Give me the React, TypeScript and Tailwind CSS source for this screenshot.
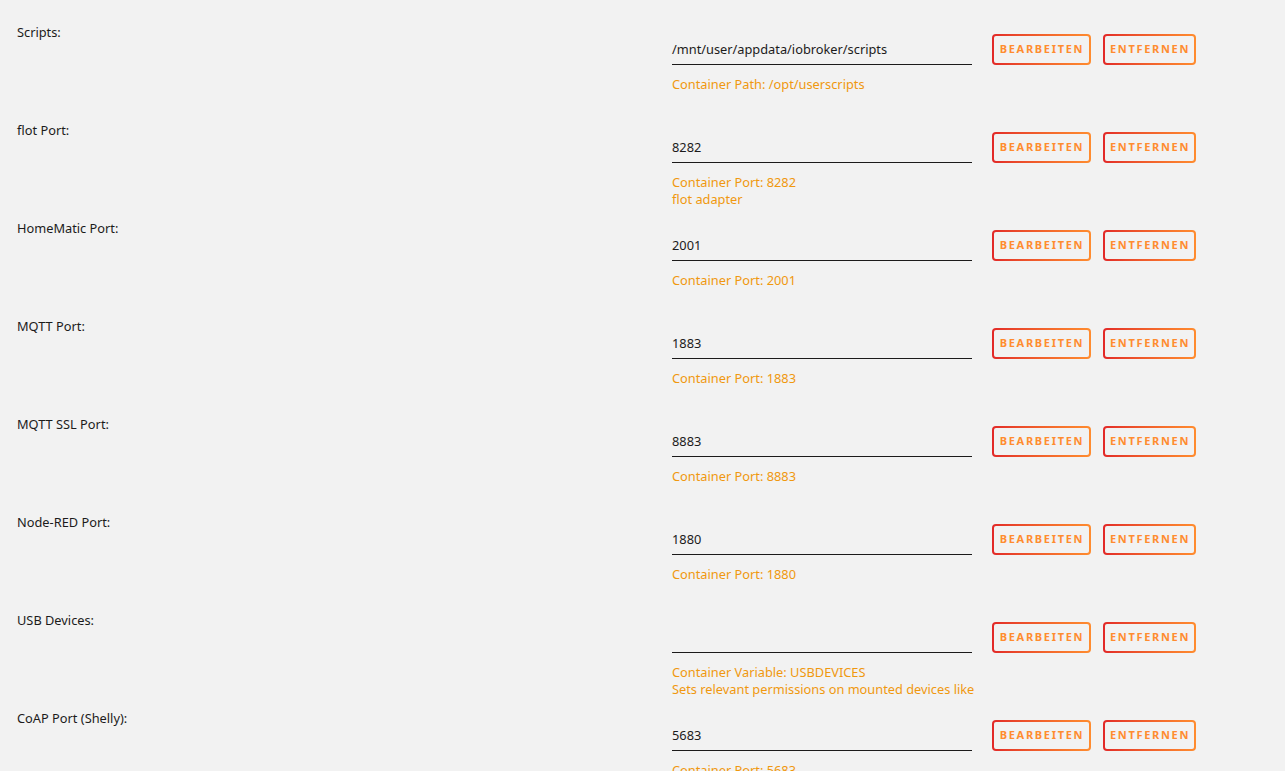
const rows = [
  { label: "Scripts:", value: "/mnt/user/appdata/iobroker/scripts", hints: ["Container Path: /opt/userscripts"] },
  { label: "flot Port:", value: "8282", hints: ["Container Port: 8282", "flot adapter"] },
  { label: "HomeMatic Port:", value: "2001", hints: ["Container Port: 2001"] },
  { label: "MQTT Port:", value: "1883", hints: ["Container Port: 1883"] },
  { label: "MQTT SSL Port:", value: "8883", hints: ["Container Port: 8883"] },
  { label: "Node-RED Port:", value: "1880", hints: ["Container Port: 1880"] },
  {
    label: "USB Devices:",
    value: "",
    hints: ["Container Variable: USBDEVICES", "Sets relevant permissions on mounted devices like"],
  },
  { label: "CoAP Port (Shelly):", value: "5683", hints: ["Container Port: 5683"] },
];

function GradientButton({ text, width }: { text: string; width: string }) {
  return (
    <div className={`${width} h-[31px] rounded-[4px] bg-gradient-to-r from-[#e22828] to-[#ff8c2f] p-[2px]`}>
      <div className="flex h-full w-full items-center justify-center rounded-[2px] bg-[#f2f2f2]">
        <span className="pl-[1px] text-[11px] font-bold tracking-[1.7px] text-[#ff8c2f]">{text}</span>
      </div>
    </div>
  );
}

export default function App() {
  return (
    <div
      className="h-[771px] overflow-hidden bg-[#f2f2f2] pt-[22px] text-[12.8px] text-[#1c1b1b]"
      style={{ fontFamily: '"Noto Sans", "Open Sans", sans-serif' }}
    >
      {rows.map((r) => (
        <div key={r.label} className="flex h-[98px]">
          <div className="w-[672px] shrink-0 pl-[17px] leading-[20px]">{r.label}</div>
          <div className="pt-[12px]">
            <div className="flex items-end">
              <div className="flex h-[31px] w-[300px] items-center border-b border-[#1c1b1b] pt-[2px]">
                {r.value}
              </div>
              <div className="ml-[20px] flex gap-[12px]">
                <GradientButton text="BEARBEITEN" width="w-[99px]" />
                <GradientButton text="ENTFERNEN" width="w-[93px]" />
              </div>
            </div>
            <div className="mt-[11px] leading-[17px] text-[#f0980f]">
              {r.hints.map((h) => (
                <div key={h}>{h}</div>
              ))}
            </div>
          </div>
        </div>
      ))}
    </div>
  );
}
